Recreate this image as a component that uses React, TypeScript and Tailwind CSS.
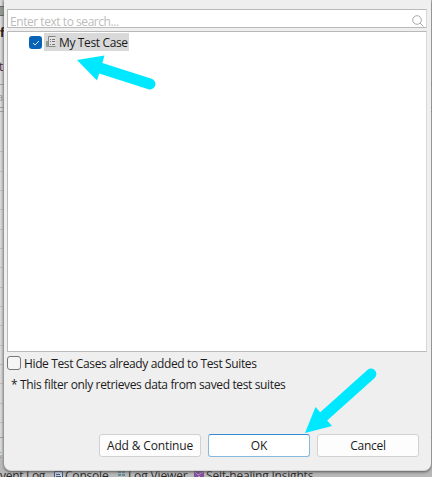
import React from "react";

const gridRows = [151, 171, 190, 209, 229, 248, 267, 287, 306, 325, 345, 364, 383, 403, 422];

function ConsoleIcon() {
  return (
    <svg width="9" height="10" viewBox="0 0 9 10" className="shrink-0">
      <path d="M.5.5h8v9h-8z" fill="#c5cedb" stroke="#435783" />
      <path d="M2 3.5h4M2 5.5h5" stroke="#435783" />
    </svg>
  );
}

function LogIcon() {
  return (
    <svg width="9" height="10" viewBox="0 0 9 10" className="shrink-0">
      <path d="M1 1h3M5 1h3M1 4h3M5 4h3M1 8h3M5 8h3" stroke="#638b9c" strokeWidth="2" />
    </svg>
  );
}

function InsightsIcon() {
  return (
    <svg width="10" height="10" viewBox="0 0 10 10" className="shrink-0">
      <path d="M0 0h10v10H0z" fill="#8251a0" />
      <path d="M1 1l3 3 5-3M2 9l3-4 4 4" fill="none" stroke="#c295cb" />
    </svg>
  );
}

function TestCaseIcon() {
  return (
    <svg width="10" height="12" viewBox="0 0 10 12" className="shrink-0">
      <path d="M9.5.5h-7v10h7" fill="#e3e3e3" stroke="#858585" />
      <path d="M4 3.5h1M6 3.5h3M4 5.5h1M6 5.5h3M4 8.5h1M6 8.5h3" stroke="#777" />
      <path d="M2 5.5H.5v5H2" fill="#91a58f" stroke="#8c9889" />
    </svg>
  );
}

function Backdrop() {
  return (
    <div className="absolute inset-0 overflow-hidden bg-[#b8b8b8]">
      <div className="absolute left-0 top-0 h-[455px] w-1 bg-linear-to-r from-[#dedede] to-[#b9b9b9]" />
      {gridRows.map((y) => (
        <div key={y} className="absolute left-0 h-px w-full bg-[#b9b9b9]" style={{ top: y }} />
      ))}
      {[84, 107, 111, 437].map((y) => (
        <div key={y} className="absolute left-0 h-px w-full bg-[#a0a0a0]" style={{ top: y }} />
      ))}
      <div className="absolute left-0 top-1.5 h-2.5 w-1 border-y border-[#666] bg-[#919991]" />
      <span className="absolute left-0 top-[25px] text-xs font-bold leading-4">f</span>
      <span className="absolute left-[-1px] top-[59px] text-xs leading-4 text-[#4b2634]">te</span>
      <span className="absolute left-[-3px] top-[89px] text-[11px] leading-4 text-[#999]">a</span>
      <span className="absolute left-[-3px] top-[446px] text-[11px] leading-4 text-[#39899b]">t</span>
      <div className="absolute left-0 top-[468px] flex h-4 w-full items-center whitespace-nowrap text-xs leading-4 text-[#292929]">
        <span className="w-[54px] tracking-[-0.3px]">vent Log</span>
        <ConsoleIcon />
        <span className="ml-0.5 w-[52px] tracking-[-0.2px]">Console</span>
        <LogIcon />
        <span className="ml-0.5 w-[66px] tracking-[-0.15px]">Log Viewer</span>
        <InsightsIcon />
        <span className="ml-0.5 tracking-[-0.2px]">Self-healing Insights</span>
      </div>
    </div>
  );
}

export default function App() {
  return (
    <div className="relative h-[477px] w-[432px] overflow-hidden font-['Open_Sans',sans-serif] text-[#1b1b1b]">
      <Backdrop />
      <main className="relative ml-1 flex h-[471px] w-[427px] flex-col rounded-b-[7px] border-b border-[#d4d4d4] bg-[#efefef] pl-[3px] pr-1 pt-[9px] shadow-[0_1px_3px_#555]">
        <div className="flex h-[19px] w-[420px] shrink-0 items-center border border-[#b9b9b9] border-r-[#d8d8d8] bg-white pl-[2px] pr-[2px]">
          <span className="mt-[7px] flex-1 whitespace-nowrap text-xs leading-4 tracking-[-0.45px] text-[#bcbcbc]">Enter text to search...</span>
          <svg width="12" height="12" viewBox="0 0 12 12" className="mt-[4px]" fill="none" stroke="#aaa9af">
            <circle cx="5" cy="5" r="4.3" /><path d="m8 8 3.5 3.5" />
          </svg>
        </div>
        <div className="mt-[3px] h-[321px] w-[420px] shrink-0 border border-[#b9b9b9] border-r-[#d8d8d8] bg-white pl-[21px] pt-px">
          <div className="flex h-[18px] items-center">
            <span className="mt-px flex size-[13px] items-center justify-center rounded-[3px] bg-[#0862b8]">
              <svg width="8" height="6" viewBox="0 0 8 6" fill="none" stroke="#d8e8f7"><path d="m1 3 2 2 4-4" /></svg>
            </span>
            <div className="ml-[2px] flex h-[18px] w-[85px] items-center bg-[#d9d9d9] pl-0.5">
              <TestCaseIcon />
              <span className="ml-[3px] mt-0.5 whitespace-nowrap text-xs leading-4 tracking-[-0.36px]">My Test Case</span>
            </div>
          </div>
        </div>
        <label className="mt-1 flex h-[14px] items-center">
          <span className="size-[14px] rounded-[3px] border border-[#777] bg-[#f5f5f5]" />
          <span className="ml-[3px] mt-0.5 whitespace-nowrap text-xs leading-4 tracking-[-0.37px]">Hide Test Cases already added to Test Suites</span>
        </label>
        <p className="ml-1 mt-[7px] whitespace-nowrap text-xs leading-4 tracking-[-0.36px]">* This filter only retrieves data from saved test suites</p>
        <div className="ml-[92px] mt-[41px] flex gap-[7px] text-xs leading-[22px]">
          <button className="h-[23px] w-[102px] whitespace-nowrap rounded-[3px] border border-[#d1d1d1] bg-[#fdfdfd] tracking-[-0.15px]">Add &amp; Continue</button>
          <button className="h-[23px] w-[102px] rounded-[3px] border border-[#87b9df] border-t-[#348bd1] bg-white tracking-[-0.2px]">OK</button>
          <button className="h-[23px] w-[102px] rounded-[3px] border border-[#d1d1d1] bg-[#fdfdfd] tracking-[-0.3px]">Cancel</button>
        </div>
      </main>
      <svg className="pointer-events-none absolute inset-0" width="432" height="477" viewBox="0 0 432 477">
        <g fill="#00e8ff" stroke="#00e8ff">
          <path d="m77 60 27.5-4.5-7.5 25Z" stroke="none" />
          <path d="m100 68 50 16" strokeWidth="10.8" strokeLinecap="round" />
          <path d="m305 433 10.5-26 16.5 19Z" stroke="none" />
          <path d="m323 417 48-43" strokeWidth="10.8" strokeLinecap="round" />
        </g>
      </svg>
    </div>
  );
}
